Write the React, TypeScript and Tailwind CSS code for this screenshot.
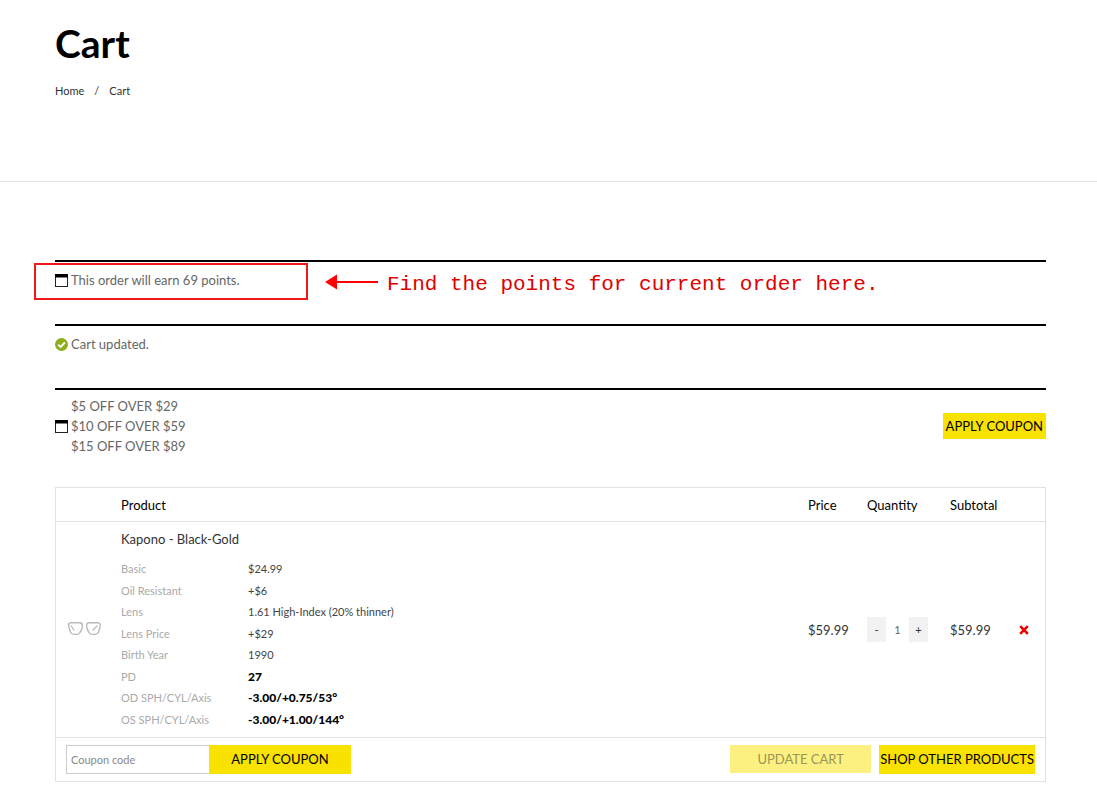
import React, { useState } from "react";

const details = [
  { label: "Basic", value: "$24.99" },
  { label: "Oil Resistant", value: "+$6" },
  { label: "Lens", value: "1.61 High-Index (20% thinner)" },
  { label: "Lens Price", value: "+$29" },
  { label: "Birth Year", value: "1990" },
  { label: "PD", value: "27", strong: true },
  { label: "OD SPH/CYL/Axis", value: "-3.00/+0.75/53°", strong: true },
  { label: "OS SPH/CYL/Axis", value: "-3.00/+1.00/144°", strong: true },
];

const offers = ["$5 OFF OVER $29", "$10 OFF OVER $59", "$15 OFF OVER $89"];

const WindowIcon = () => (
  <svg className="h-[13px] w-[13px] shrink-0" viewBox="0 0 13 13" aria-hidden="true">
    <rect x="0.5" y="0.5" width="12" height="12" fill="#fff" stroke="#222" />
    <rect width="13" height="3.5" fill="#000" />
  </svg>
);

const CheckIcon = () => (
  <svg className="h-[13px] w-[13px] shrink-0" viewBox="0 0 13 13" aria-hidden="true">
    <circle cx="6.5" cy="6.5" r="6.5" fill="#8fae1b" />
    <path d="M3.2 6.6l2.4 2.4 4.3-4.5" fill="none" stroke="#fff" strokeWidth="1.9" />
  </svg>
);

const GlassesIcon = () => (
  <svg className="h-[17px] w-[35px]" viewBox="0 0 35 17" fill="none" aria-hidden="true">
    <g stroke="#b9b9b9" strokeWidth="1.4" strokeLinejoin="round">
      <path d="M4.2 1.8H14Q16.6 2 16.4 5Q16 9 14 11.5Q12.8 13.4 10.5 13.4H8Q5.5 13.4 4.4 11L2.7 5.4Q2.2 2.6 4.2 1.8Z" />
      <path d="M32.8 1.8H23Q20.4 2 20.6 5Q21 9 23 11.5Q24.2 13.4 26.5 13.4H29Q31.5 13.4 32.6 11L34.1 5.4Q34.6 2.6 32.8 1.8Z" />
      <path d="M5 4.5l3.2 5M31.5 4.5l-5 5" strokeWidth="1.2" />
    </g>
    <path d="M1.5 3l2-1" stroke="#cfcfcf" />
  </svg>
);

const Notice = ({ children }: { children: React.ReactNode }) => (
  <div className="relative flex min-h-16 items-start border-t-2 border-black pt-2">
    {children}
  </div>
);

export default function App() {
  const [quantity, setQuantity] = useState(1);

  return (
    <div className="min-h-screen bg-white pb-5 font-['Lato','Open_Sans',sans-serif] text-[13px] leading-5 text-[#666]">
      <header className="border-b border-[#e2e2e2] pt-[18px] pr-[51px] pb-20 pl-[55px]">
        <h1 className="text-[39px] leading-[50px] font-bold text-black">Cart</h1>
        <nav
          aria-label="Breadcrumb"
          className="mt-[13px] flex gap-[10px] text-[11px] text-[#333]"
        >
          <a href="#home">Home</a>
          <span>/</span>
          <span>Cart</span>
        </nav>
      </header>

      <main className="pt-[78px] pr-[51px] pl-[55px]">
        <Notice>
          <p className="flex items-center gap-[3px]">
            <WindowIcon />
            This order will earn 69 points.
          </p>
          {/* callout over the points notice */}
          <div className="absolute top-px -left-[21px] flex items-center gap-[17px]">
            <div className="h-[37px] w-[274px] border-2 border-[#f01818]" />
            <div className="flex items-center gap-[9px]">
              <svg className="h-4 w-[53px]" viewBox="0 0 53 16" aria-hidden="true">
                <path d="M0 8L12 0.5V15.5Z" fill="#f00" />
                <path d="M10 8H53" stroke="#f00" strokeWidth="2" />
              </svg>
              <span className="pt-[6px] font-['Liberation_Mono',monospace] text-[21px] leading-6 whitespace-nowrap text-[#e00000]">
                Find the points for current order here.
              </span>
            </div>
          </div>
        </Notice>

        <Notice>
          <p className="flex items-center gap-[3px]">
            <CheckIcon />
            Cart updated.
          </p>
        </Notice>

        <div className="flex items-center justify-between border-t-2 border-black pt-[6px] pb-[31px]">
          <div className="flex items-center gap-[3px]">
            <WindowIcon />
            <ul>
              {offers.map((offer) => (
                <li key={offer}>{offer}</li>
              ))}
            </ul>
          </div>
          <button className="bg-[#f9e100] px-[3px] py-[3px] text-black">APPLY COUPON</button>
        </div>

        <div className="border border-[#e2e2e2]">
          <table className="w-full table-fixed text-left text-[#333]">
            <colgroup>
              <col className="w-[55px]" />
              <col />
              <col className="w-[59px]" />
              <col className="w-[83px]" />
              <col className="w-[69px]" />
              <col className="w-[36px]" />
            </colgroup>
            <thead>
              <tr className="border-b border-[#e2e2e2] text-black">
                <th aria-label="Image" />
                <th className="px-[10px] pt-[7px] pb-[6px] font-normal">Product</th>
                <th className="px-[10px] font-normal">Price</th>
                <th className="px-[10px] font-normal">Quantity</th>
                <th className="px-[10px] font-normal">Subtotal</th>
                <th aria-label="Remove" />
              </tr>
            </thead>
            <tbody>
              <tr className="border-b border-[#e2e2e2]">
                <td className="pl-[10px]">
                  <GlassesIcon />
                </td>
                <td className="px-[10px] pt-[7px] pb-[7px]">
                  <a href="#kapono">Kapono - Black-Gold</a>
                  <dl className="mt-[9px] grid min-h-[172px] content-between text-[11px] leading-[21px]">
                    {details.map(({ label, value, strong }) => (
                      <div key={label} className="flex">
                        <dt className="w-[127px] text-[#aaa]">{label}</dt>
                        <dd className={strong ? "text-[12px] font-black text-black" : "text-[#444]"}>
                          {value}
                        </dd>
                      </div>
                    ))}
                  </dl>
                </td>
                <td className="px-[10px]">$59.99</td>
                <td className="px-[10px]">
                  <div className="flex items-center text-[11px]">
                    <button
                      aria-label="Decrease quantity"
                      className="h-[25px] w-[19px] bg-[#f2f2f2]"
                      onClick={() => setQuantity(Math.max(1, quantity - 1))}
                    >
                      -
                    </button>
                    <input
                      aria-label="Quantity"
                      className="w-[23px] text-center text-[#666]"
                      value={quantity}
                      onChange={(e) => setQuantity(Number(e.target.value) || 1)}
                    />
                    <button
                      aria-label="Increase quantity"
                      className="h-[25px] w-[19px] bg-[#f2f2f2]"
                      onClick={() => setQuantity(quantity + 1)}
                    >
                      +
                    </button>
                  </div>
                </td>
                <td className="px-[10px]">$59.99</td>
                <td className="pl-[10px]">
                  <button aria-label="Remove item" className="block">
                    <svg className="h-[10px] w-[10px]" viewBox="0 0 10 10" aria-hidden="true">
                      <path d="M1.2 1.2l7.6 7.6M8.8 1.2L1.2 8.8" stroke="#f00000" strokeWidth="2.6" />
                    </svg>
                  </button>
                </td>
              </tr>
            </tbody>
          </table>

          <div className="flex items-start justify-between px-[10px] py-[7px]">
            <form className="flex" onSubmit={(e) => e.preventDefault()}>
              <input
                type="text"
                aria-label="Coupon code"
                placeholder="Coupon code"
                className="h-[29px] w-[143px] border border-r-0 border-[#ccc] px-1 text-[11px] placeholder:text-[#888]"
              />
              <button className="h-[29px] w-[142px] bg-[#f9e100] pb-[2px] text-black">
                APPLY COUPON
              </button>
            </form>
            <div className="flex items-start gap-2">
              <button disabled className="h-7 w-[141px] bg-[#fcf080] text-[#9b955a]">
                UPDATE CART
              </button>
              <button className="h-[29px] bg-[#f9e100] px-px pb-[2px] text-black">
                SHOP OTHER PRODUCTS
              </button>
            </div>
          </div>
        </div>
      </main>
    </div>
  );
}
